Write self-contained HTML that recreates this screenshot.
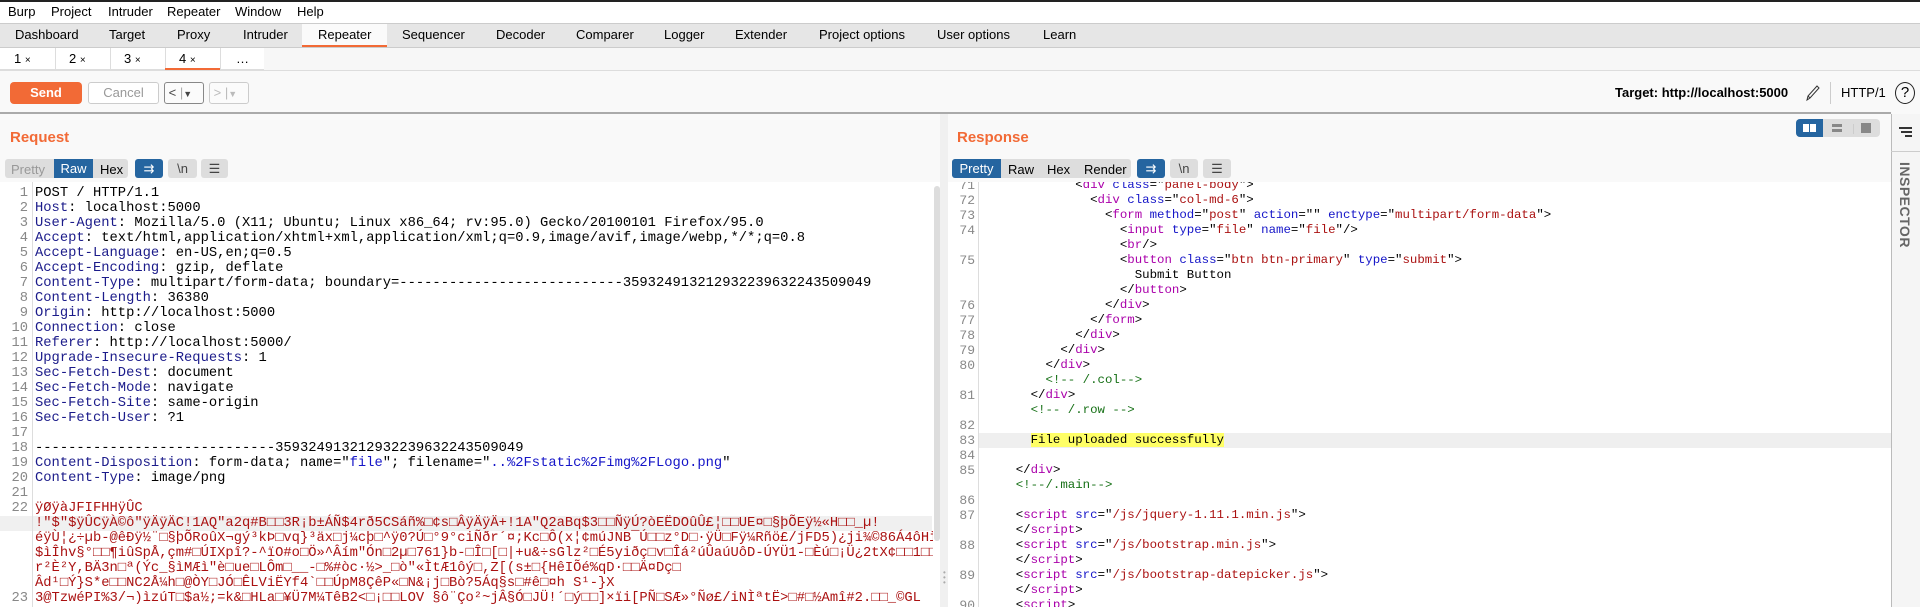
<!DOCTYPE html>
<html><head><meta charset="utf-8"><style>
*{margin:0;padding:0;box-sizing:border-box}
body{width:1920px;height:607px;overflow:hidden;background:#f9f9f9;font-family:"Liberation Sans",Arial,sans-serif;font-size:13px;color:#000;position:relative}
.a{position:absolute;white-space:nowrap}
.mono{font-family:"Liberation Mono","DejaVu Sans Mono",monospace;font-size:13.8px;line-height:15px;white-space:pre}
.k{color:#1b1b8a}.r{color:#a11}.b{color:#1515c8}.t{color:#a0a}.at{color:#1515c8}.v{color:#a11}.c{color:#167016}
.btn{position:absolute;height:19px;background:#ddd;border-radius:3px;text-align:center;line-height:19px;font-size:13px}
.sel{background:#2565a0;color:#fff}
</style></head><body>
<div class="a" style="left:0;top:0;width:1920px;height:2px;background:#222"></div>
<div class="a" style="left:0;top:2px;width:1920px;height:21px;background:#fff"></div>
<div class="a" style="left:8px;top:4px">Burp</div>
<div class="a" style="left:51px;top:4px">Project</div>
<div class="a" style="left:108px;top:4px">Intruder</div>
<div class="a" style="left:167px;top:4px">Repeater</div>
<div class="a" style="left:235px;top:4px">Window</div>
<div class="a" style="left:297px;top:4px">Help</div>
<div class="a" style="left:0;top:23px;width:1920px;height:25px;background:#e6e6e6;border-top:1px solid #ccc;border-bottom:1px solid #ccc"></div>
<div class="a" style="left:302px;top:24px;width:85px;height:23px;background:#fafafa;border-bottom:2px solid #f26a36"></div>
<div class="a" style="left:15px;top:27px">Dashboard</div>
<div class="a" style="left:109px;top:27px">Target</div>
<div class="a" style="left:177px;top:27px">Proxy</div>
<div class="a" style="left:243px;top:27px">Intruder</div>
<div class="a" style="left:318px;top:27px">Repeater</div>
<div class="a" style="left:402px;top:27px">Sequencer</div>
<div class="a" style="left:496px;top:27px">Decoder</div>
<div class="a" style="left:576px;top:27px">Comparer</div>
<div class="a" style="left:664px;top:27px">Logger</div>
<div class="a" style="left:735px;top:27px">Extender</div>
<div class="a" style="left:819px;top:27px">Project options</div>
<div class="a" style="left:937px;top:27px">User options</div>
<div class="a" style="left:1043px;top:27px">Learn</div>
<div class="a" style="left:0;top:48px;width:1920px;height:23px;background:#f7f7f7;border-bottom:1px solid #ddd"></div>
<div class="a" style="left:0;top:48px;width:264px;height:23px;background:#fff;border-bottom:2px solid #ddd"></div>
<div class="a" style="left:55px;top:48px;width:1px;height:22px;background:#ddd"></div>
<div class="a" style="left:110px;top:48px;width:1px;height:22px;background:#ddd"></div>
<div class="a" style="left:165px;top:48px;width:1px;height:22px;background:#ddd"></div>
<div class="a" style="left:220px;top:48px;width:1px;height:22px;background:#ddd"></div>
<div class="a" style="left:165px;top:68px;width:55px;height:2px;background:#f26a36"></div>
<div class="a" style="left:14px;top:51px">1 <span style="font-size:10px">×</span></div>
<div class="a" style="left:69px;top:51px">2 <span style="font-size:10px">×</span></div>
<div class="a" style="left:124px;top:51px">3 <span style="font-size:10px">×</span></div>
<div class="a" style="left:179px;top:51px">4 <span style="font-size:10px">×</span></div>
<div class="a" style="left:236px;top:51px">…</div>
<div class="a" style="left:10px;top:82px;width:72px;height:22px;background:#f26a36;border-radius:4px;color:#fff;font-weight:bold;text-align:center;line-height:22px">Send</div>
<div class="a" style="left:88px;top:82px;width:71px;height:22px;border:1px solid #ccc;border-radius:3px;background:#fff;color:#999;text-align:center;line-height:20px">Cancel</div>
<div class="a" style="left:164px;top:82px;width:40px;height:22px;border:1px solid #888;border-radius:3px;background:#fbfbfb;line-height:20px;color:#444">&nbsp;&lt; <span style="color:#aaa">|</span><span style="font-size:9px">▼</span></div>
<div class="a" style="left:209px;top:82px;width:40px;height:22px;border:1px solid #ccc;border-radius:3px;background:#fbfbfb;line-height:20px;color:#bbb">&nbsp;&gt; |<span style="font-size:9px">▼</span></div>
<div class="a" style="left:1615px;top:85px;font-weight:bold">Target: http://localhost:5000</div>
<svg class="a" style="left:1805px;top:84px" width="16" height="18" viewBox="0 0 16 18"><path d="M2 16 L3 12 L12 2 L14 4 L5 14 Z M3 12 L5 14" fill="none" stroke="#333" stroke-width="1"/></svg>
<div class="a" style="left:1830px;top:82px;width:1px;height:22px;background:#ccc"></div>
<div class="a" style="left:1841px;top:85px">HTTP/1</div>
<div class="a" style="left:1895px;top:82px;width:20px;height:22px;border:1.3px solid #222;border-radius:50%;text-align:center;line-height:20px;font-size:15px">?</div>
<div class="a" style="left:0;top:112px;width:1891px;height:2px;background:#aaa"></div>
<div class="a" style="left:10px;top:129px;color:#f26a36;font-weight:bold;font-size:15px">Request</div>
<div class="btn" style="left:5px;top:159px;width:123px;border-radius:3px"></div>
<div class="a" style="left:11px;top:162px;color:#999">Pretty</div>
<div class="btn sel" style="left:54px;top:159px;width:39px;border-radius:0">Raw</div>
<div class="a" style="left:100px;top:162px">Hex</div>
<div class="btn sel" style="left:135px;top:159px;width:28px">⇉</div>
<div class="btn" style="left:168px;top:159px;width:29px;color:#444">\n</div>
<div class="btn" style="left:201px;top:159px;width:27px;color:#444">☰</div>
<div class="a" style="left:0;top:182px;width:940px;height:425px;background:#fff;overflow:hidden">
<div class="a" style="left:0;top:334px;width:932px;height:15px;background:#f0f0f0"></div>
<div class="a" style="left:32px;top:0;width:1px;height:425px;background:#ddd"></div>
<div class="a" style="left:934px;top:4px;width:6px;height:355px;background:#ddd;border-radius:3px"></div>
<pre class="a mono" style="left:0;top:4px;width:28px;text-align:right;color:#888">1
2
3
4
5
6
7
8
9
10
11
12
13
14
15
16
17
18
19
20
21
22





23</pre>
<pre class="a mono" style="left:35px;top:4px;width:898px;overflow:hidden">POST / HTTP/1.1
<span class="k">Host</span>: localhost:5000
<span class="k">User-Agent</span>: Mozilla/5.0 (X11; Ubuntu; Linux x86_64; rv:95.0) Gecko/20100101 Firefox/95.0
<span class="k">Accept</span>: text/html,application/xhtml+xml,application/xml;q=0.9,image/avif,image/webp,*/*;q=0.8
<span class="k">Accept-Language</span>: en-US,en;q=0.5
<span class="k">Accept-Encoding</span>: gzip, deflate
<span class="k">Content-Type</span>: multipart/form-data; boundary=---------------------------359324913212932239632243509049
<span class="k">Content-Length</span>: 36380
<span class="k">Origin</span>: http://localhost:5000
<span class="k">Connection</span>: close
<span class="k">Referer</span>: http://localhost:5000/
<span class="k">Upgrade-Insecure-Requests</span>: 1
<span class="k">Sec-Fetch-Dest</span>: document
<span class="k">Sec-Fetch-Mode</span>: navigate
<span class="k">Sec-Fetch-Site</span>: same-origin
<span class="k">Sec-Fetch-User</span>: ?1

-----------------------------359324913212932239632243509049
<span class="k">Content-Disposition</span>: form-data; name="<span class="b">file</span>"; filename="<span class="b">..%2Fstatic%2Fimg%2FLogo.png</span>"
<span class="k">Content-Type</span>: image/png

<span class="r">ÿØÿàJFIFHHÿÛC
!"$"$ÿÛCÿÀ©ô"ÿÄÿÄC!1AQ"a2q#B□□3R¡b±ÁÑ$4rð5CSáñ%□¢s□ÂÿÄÿÄ+!1A"Q2aBq$3□□ÑÿÚ?òEËDOûÛ£¦□□UE¤□§þÕEÿ½«H□□_µ!
éÿÙ¦¿÷µb-@êÐÿ½¨□§þÕRoûX¬gý³kÞ□vq}³äx□j¼cþ□^ÿ0?Ú□°9°ciÑðr´¤;Kc□Ô(x¦¢múJNB¯Ú□□z°D□·ÿÜ□Fÿ¼Rñö£/jFD5)¿ji¾©86Á4ôHìÀ"
$ìÎhv§°□□¶iûSpÅ,çm#□ÚIXpî?-^ïO#o□Ö»^Âím"Ón□2µ□761}b-□Î□[□|+u&÷sGlz²□É5yiðç□v□Îá²úÛaúUôD-ÚYÜ1-□Èú□¡Ü¿2tX¢□□1□□sò
r²È²Y,BÄ3n□ª(Ýc_§ìMÆì"è□ue□LÔm□__-□%#òc·½>_□ò"«ÌtÆ1ôý□,Z[(s±□{HêIÕé%qD·□□Ä¤Dç□
Âd¹□Ý}S*e□□NC2Å¼h□@ÒY□JÓ□ÊLViËYf4`□□ÚpM8ÇêP«□N&¡j□Bò?5Áq§s□#ê□¤h S¹-}X
3@TzwéPI%3/¬)ìzúT□$a½;=k&□HLa□¥Ü7M¼TêB2&lt;□¡□□LOV §ô¨Ço²~jÂ§Ó□JÜ!´□ý□□]×ïi[PÑ□SÆ»°Ñø£/iNÌªtË&gt;□#□½Amî#2.□□_©GL</span></pre>
</div>
<div class="a" style="left:940px;top:114px;width:8px;height:493px;background:#f0f0f0"></div>
<div class="a" style="left:943px;top:570px;color:#aaa;font-size:8px;line-height:5px">•<br>•<br>•</div>
<div class="a" style="left:957px;top:129px;color:#f26a36;font-weight:bold;font-size:15px">Response</div>
<div class="btn" style="left:952px;top:159px;width:179px"></div>
<div class="btn sel" style="left:952px;top:159px;width:49px;border-radius:3px 0 0 3px">Pretty</div>
<div class="a" style="left:1008px;top:162px">Raw</div>
<div class="a" style="left:1047px;top:162px">Hex</div>
<div class="a" style="left:1084px;top:162px">Render</div>
<div class="btn sel" style="left:1137px;top:159px;width:28px">⇉</div>
<div class="btn" style="left:1170px;top:159px;width:28px;color:#444">\n</div>
<div class="btn" style="left:1203px;top:159px;width:28px;color:#444">☰</div>
<div class="a" style="left:1796px;top:119px;width:84px;height:18px;background:#ddd;border-radius:4px"></div>
<div class="a" style="left:1796px;top:119px;width:27px;height:18px;background:#2565a0;border-radius:4px 0 0 4px"></div>
<div class="a" style="left:1803px;top:124px;width:6px;height:8px;background:#fff"></div>
<div class="a" style="left:1810px;top:124px;width:6px;height:8px;background:#fff"></div>
<div class="a" style="left:1832px;top:124px;width:10px;height:3px;background:#888"></div>
<div class="a" style="left:1832px;top:129px;width:10px;height:3px;background:#888"></div>
<div class="a" style="left:1853px;top:124px;width:1px;height:10px;background:#ccc"></div>
<div class="a" style="left:1861px;top:123px;width:10px;height:10px;background:#888"></div>
<div class="a" style="left:948px;top:182px;width:943px;height:425px;background:#fff;overflow:hidden">
<div class="a" style="left:30px;top:251px;width:913px;height:15px;background:#efefef"></div>
<div class="a" style="left:30px;top:0;width:1px;height:425px;background:#ddd"></div>
<pre class="a mono" style="left:0;top:-4px;width:27px;text-align:right;color:#888;font-size:13px">71
72
73
74

75


76
77
78
79
80

81

82
83
84
85

86
87

88

89

90</pre>
<pre class="a mono" style="left:38px;top:-4px;width:900px;overflow:hidden;font-size:12.4px">            &lt;<span class="t">div</span> <span class="at">class</span>="<span class="v">panel-body</span>"&gt;
              &lt;<span class="t">div</span> <span class="at">class</span>="<span class="v">col-md-6</span>"&gt;
                &lt;<span class="t">form</span> <span class="at">method</span>="<span class="v">post</span>" <span class="at">action</span>="" <span class="at">enctype</span>="<span class="v">multipart/form-data</span>"&gt;
                  &lt;<span class="t">input</span> <span class="at">type</span>="<span class="v">file</span>" <span class="at">name</span>="<span class="v">file</span>"/&gt;
                  &lt;<span class="t">br</span>/&gt;
                  &lt;<span class="t">button</span> <span class="at">class</span>="<span class="v">btn btn-primary</span>" <span class="at">type</span>="<span class="v">submit</span>"&gt;
                    Submit Button
                  &lt;/<span class="t">button</span>&gt;
                &lt;/<span class="t">div</span>&gt;
              &lt;/<span class="t">form</span>&gt;
            &lt;/<span class="t">div</span>&gt;
          &lt;/<span class="t">div</span>&gt;
        &lt;/<span class="t">div</span>&gt;
        <span class="c">&lt;!-- /.col--&gt;</span>
      &lt;/<span class="t">div</span>&gt;
      <span class="c">&lt;!-- /.row --&gt;</span>

      <span style="background:#ffff66">File uploaded successfully</span>

    &lt;/<span class="t">div</span>&gt;
    <span class="c">&lt;!--/.main--&gt;</span>

    &lt;<span class="t">script</span> <span class="at">src</span>="<span class="v">/js/jquery-1.11.1.min.js</span>"&gt;
    &lt;/<span class="t">script</span>&gt;
    &lt;<span class="t">script</span> <span class="at">src</span>="<span class="v">/js/bootstrap.min.js</span>"&gt;
    &lt;/<span class="t">script</span>&gt;
    &lt;<span class="t">script</span> <span class="at">src</span>="<span class="v">/js/bootstrap-datepicker.js</span>"&gt;
    &lt;/<span class="t">script</span>&gt;
    &lt;<span class="t">script</span>&gt;</pre>
</div>
<div class="a" style="left:1891px;top:114px;width:29px;height:493px;background:#f5f5f5;border-left:1px solid #bbb"></div>
<div class="a" style="left:1891px;top:151px;width:29px;height:1px;background:#ccc"></div>
<div class="a" style="left:1899px;top:127px;width:13px;height:2px;background:#333"></div>
<div class="a" style="left:1901px;top:131px;width:11px;height:2px;background:#333"></div>
<div class="a" style="left:1905px;top:135px;width:7px;height:2px;background:#333"></div>
<div class="a" style="left:1913px;top:162px;transform:rotate(90deg);transform-origin:0 0;font-weight:bold;color:#666;font-size:14px;letter-spacing:0.5px">INSPECTOR</div>
</body></html>
